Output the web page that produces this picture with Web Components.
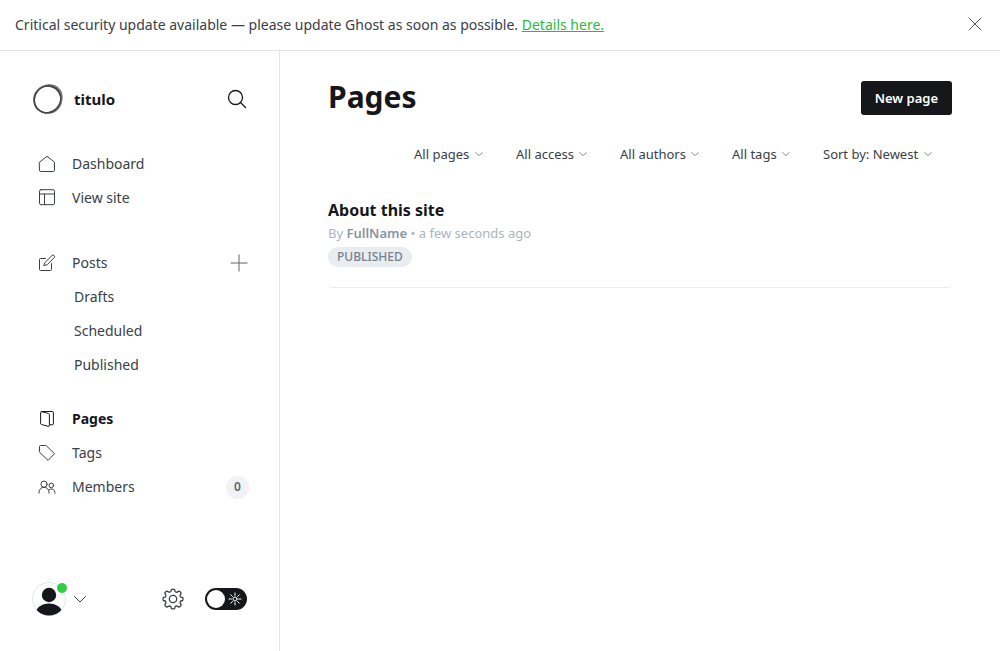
<!DOCTYPE html>
<html lang="en">
<head>
<meta charset="utf-8">
<meta name="viewport" content="width=device-width, initial-scale=1">
<title>Pages</title>
<style>
  html, body { margin: 0; }
  body { background: #fff; color: #394047; font-family: "Noto Sans", "Open Sans", sans-serif; font-size: 14px; line-height: 20px; }
</style>
</head>
<body>
<admin-app></admin-app>
<script>
const BASE = `*, *::before, *::after { box-sizing: border-box; }
  button, select, input { font: inherit; color: inherit; margin: 0; }
  button { background: none; border: 0; padding: 0; cursor: pointer; }
  a { color: inherit; text-decoration: none; }
  svg { display: block; }`;

function define(name, css, html) {
  const template = document.createElement('template');
  template.innerHTML = `<style>${BASE}${css}</style>${html}`;
  customElements.define(name, class extends HTMLElement {
    constructor() {
      super();
      this.attachShadow({ mode: 'open' }).append(template.content.cloneNode(true));
    }
  });
}

/* Each icon: [view box, drawing] */
const ICONS = {
  close: ['0 0 14 14', '<path d="M1 1l12 12M13 1L1 13"/>'],
  search: ['0 0 20 20', '<circle cx="8.5" cy="8.5" r="7"/><path d="M13.5 13.5l5 5"/>'],
  home: ['0 0 18 18', '<path d="M1.5 7.2L9 1.300l7.500 5.900v8.100a1.200 1.200 0 0 1-1.200 1.200H2.700a1.200 1.200 0 0 1-1.200-1.200z"/>'],
  site: ['0 0 18 18', '<rect x="1.500" y=".7" width="15" height="15" rx="1.500"/><path d="M1.500 5h15M6.500 5v10.700"/>'],
  edit: ['0 0 18 18', '<path d="M7.500 4.500H2.500a1 1 0 0 0-1 1v10a1 1 0 0 0 1 1h10a1 1 0 0 0 1-1V9.500"/><path d="M7 8.500L14 1.500a1.300 1.300 0 0 1 1.900 0l.3.300a1.300 1.300 0 0 1 0 1.900L9.200 10.700l-3 .8z"/>'],
  plus: ['0 0 18 18', '<path stroke-linecap="butt" d="M9 .5v17M.5 9h17"/>'],
  pages: ['0 0 18 18', '<path d="M3.500 1.500h10.700a1.200 1.200 0 0 1 1.200 1.200v11.100a1 1 0 0 1-1 1h-2.600"/><path d="M3.500 1.600l7 1.900a1.200 1.200 0 0 1 .9 1.200v10.600a1 1 0 0 1-1.300 1l-6.600-1.800a1.200 1.200 0 0 1-.9-1.200V2.500c0-.7.500-1 .9-.9z"/>'],
  tags: ['0 0 18 18', '<path d="M1.500 2.500a1 1 0 0 1 1-1h5a1.500 1.500 0 0 1 1 .4l8 7.800-6.400 6.600L1.900 8.700a1.500 1.500 0 0 1-.4-1z"/>'],
  members: ['0 0 18 18', '<circle cx="6" cy="6.200" r="3.100"/><circle cx="13.300" cy="7.400" r="2.300"/><path d="M1 15.200v-.9a5 5 0 0 1 10 0v.9M10.900 11.800a3.700 3.700 0 0 1 6.100 2.700v.7"/>'],
  chevron: ['0 0 14 14', '<path d="M1.500 4.500L7 10l5.500-5.500"/>'],
  gear: ['0 0 22 22', '<circle cx="11" cy="11" r="3.700"/><path d="M9.400 1.600q1.600-.8 3.200 0l.5 2q.9.900 2 .5l1.900-1q1.800.5 2.200 2.200l-1 1.800q-.3 1.300.5 2l2 .4q.7 1.500 0 3l-2 .5q-.9.900-.5 2.100l1 1.800q-.5 1.700-2.200 2.200l-1.900-1q-1.200-.3-2 .5l-.5 2q-1.600.7-3.200 0l-.5-2q-.8-.8-2-.5l-1.900 1q-1.700-.5-2.200-2.200l1-1.800q.3-1.200-.5-2.100l-2-.5q-.7-1.500 0-3l2-.4q.8-.8.500-2.100l-1-1.700Q3.300 3.600 5 3.100l1.900 1q1.200.3 2-.5z"/>'],
  sun: ['0 0 14 14', '<circle cx="7" cy="7" r="2"/><path d="M7 1v2.500M7 10.500v2.500M1 7h2.500M10.500 7h2.500M2.800 2.800l1.700 1.700M9.500 9.500l1.700 1.700M11.200 2.800l-1.700 1.700M4.500 9.500l-1.700 1.700"/>'],
  logo: ['0 0 32 32', '<path stroke="#aaa" stroke-width="2.500" d="M17 2.500c7 .5 11.500 5 12 10.500M28.500 21c-2 4.500-5.500 7.500-10 8.300"/><g stroke="#444"><circle cx="15.500" cy="16.500" r="13.500" stroke-width="1.500"/><ellipse cx="16.300" cy="15.800" rx="14.500" ry="13.200" transform="rotate(-48 16.300 15.800)" stroke="#777" stroke-width="1.200"/><ellipse cx="15.500" cy="16.300" rx="12.700" ry="14" transform="rotate(40 15.500 16.300)" stroke-width="1.300"/></g>'],
  user: ['0 0 34 34', '<defs><clipPath id="c"><circle cx="17" cy="17" r="16.500"/></clipPath></defs><circle cx="17" cy="17" r="16.500" stroke="#e3e6e9"/><g clip-path="url(#c)" fill="#15171a" stroke="none"><circle cx="17" cy="13" r="7.200"/><ellipse cx="17" cy="32" rx="13.500" ry="10.500"/></g>']
};

class UiIcon extends HTMLElement {
  connectedCallback() {
    if (this.shadowRoot) return;
    const [box, art] = ICONS[this.getAttribute('name')];
    this.attachShadow({ mode: 'open' }).innerHTML = `<style>
      :host { display: block; flex: none; width: var(--icon-size, 18px); height: var(--icon-size, 18px); }
      svg { display: block; width: 100%; height: 100%; overflow: visible; stroke-width: var(--icon-stroke, 1); }
    </style><svg viewBox="${box}" fill="none" stroke="currentColor" stroke-linecap="round" stroke-linejoin="round" aria-hidden="true">${art}</svg>`;
  }
}
customElements.define('ui-icon', UiIcon);

class NavItem extends HTMLElement {
  connectedCallback() {
    if (this.shadowRoot) return;
    const icon = this.getAttribute('icon');
    this.attachShadow({ mode: 'open' }).innerHTML = `<style>${BASE}
      :host { display: flex; align-items: center; justify-content: space-between; height: 34px; padding-left: 6px; }
      a { display: flex; align-items: center; gap: 16px; }
      :host([sub]) { padding-left: 42px; }
      :host([active]) { color: #15171a; }
      :host([active]) span { font-weight: 700; }
    </style><a href="#">${icon ? `<ui-icon name="${icon}"></ui-icon>` : ''}<span><slot></slot></span></a><slot name="end"></slot>`;
  }
}
customElements.define('nav-item', NavItem);

class FilterSelect extends HTMLElement {
  connectedCallback() {
    if (this.shadowRoot) return;
    const text = this.getAttribute('value');
    this.attachShadow({ mode: 'open' }).innerHTML = `<style>${BASE}
      :host { display: flex; align-items: center; gap: 5px; font-size: 13px; --icon-size: 8px; --icon-stroke: 1.5; }
      select { appearance: none; border: 0; padding: 0; background: none; height: 20px; line-height: 20px; }
      ui-icon { color: #6b7682; }
    </style><select aria-label="${this.getAttribute('label')}"><option>${text}</option></select><ui-icon name="chevron"></ui-icon>`;
  }
}
customElements.define('filter-select', FilterSelect);

define('alert-banner', `
  :host { display: flex; align-items: center; justify-content: space-between; min-height: 51px; padding: 0 18px 2px 15px; border-bottom: 1px solid #dfe1e3; }
  p { margin: 0; padding-top: 2px; }
  a { color: #2bba3c; text-decoration: underline; }
  button { --icon-size: 14px; --icon-stroke: 0.9; }
`, `<p>Critical security update available — please update Ghost as soon as possible. <a href="#">Details here.</a></p>
  <button type="button" aria-label="Close"><ui-icon name="close"></ui-icon></button>`);

define('side-bar', `
  :host { display: flex; flex-direction: column; width: 280px; flex: none; border-right: 1px solid #e3e6e8; padding: 32px 30px 35px 32px; }
  header { display: flex; align-items: center; height: 32px; gap: 10px; color: #15171a; padding-right: 2px; margin-bottom: 32px; }
  header strong { flex: 1; font-size: 15px; font-weight: 700; }
  header > ui-icon { --icon-size: 32px; }
  header button { --icon-size: 20px; --icon-stroke: 1.3; }
  nav { display: flex; flex-direction: column; }
  .group { margin-bottom: 31px; }
  .posts { margin-bottom: 20px; }
  .count { display: grid; place-items: center; width: 23px; height: 23px; border-radius: 12px; background: #f1f2f4; font-size: 12px; font-weight: 600; color: #5a6570; }
  .add { --icon-size: 18px; margin-right: 1px; color: #5f666d; }
  footer { display: flex; align-items: center; margin-top: auto; height: 34px; padding-right: 2px; }
  .account { position: relative; display: flex; align-items: center; gap: 7px; --icon-size: 14px; }
  .account ui-icon[name=user] { --icon-size: 34px; }
  .dot { position: absolute; left: 25px; top: 1px; width: 10px; height: 10px; border-radius: 50%; background: #30cf43; }
  .settings { --icon-size: 22px; --icon-stroke: 1.3; margin: 0 21px 0 auto; }
  .switch { position: relative; display: flex; align-items: center; justify-content: flex-end; width: 42px; height: 22px; padding-right: 5px; border-radius: 11px; background: #15171a; color: #fff; --icon-size: 14px; cursor: pointer; }
  .switch input { appearance: none; position: absolute; inset: 0; }
  .switch::before { content: ""; position: absolute; left: 2px; top: 2px; width: 18px; height: 18px; border-radius: 50%; background: #fff; }
`, `<header><ui-icon name="logo"></ui-icon><strong>titulo</strong><button type="button" aria-label="Search"><ui-icon name="search"></ui-icon></button></header>
  <nav>
    <div class="group"><nav-item icon="home">Dashboard</nav-item><nav-item icon="site">View site</nav-item></div>
    <div class="posts"><nav-item icon="edit">Posts<button class="add" slot="end" type="button" aria-label="New post"><ui-icon name="plus"></ui-icon></button></nav-item>
      <nav-item sub>Drafts</nav-item><nav-item sub>Scheduled</nav-item><nav-item sub>Published</nav-item></div>
    <div><nav-item icon="pages" active>Pages</nav-item><nav-item icon="tags">Tags</nav-item><nav-item icon="members">Members<span class="count" slot="end">0</span></nav-item></div>
  </nav>
  <footer>
    <button class="account" type="button" aria-label="Account"><ui-icon name="user"></ui-icon><span class="dot"></span><ui-icon name="chevron"></ui-icon></button>
    <button class="settings" type="button" aria-label="Settings"><ui-icon name="gear"></ui-icon></button>
    <label class="switch"><input type="checkbox" aria-label="Night shift"><ui-icon name="sun"></ui-icon></label>
  </footer>`);

define('page-row', `
  :host { display: block; padding-bottom: 20px; border-bottom: 1px solid #ebeef0; border-radius: 4px; }
  h3 { margin: 0; font-size: 16px; line-height: 24px; font-weight: 700; color: #15171a; }
  p { margin: 0 0 2px; font-size: 13px; line-height: 23px; color: #abb4be; }
  ::slotted(b) { color: #8695a4; font-weight: 600; }
  .badge { display: block; width: fit-content; padding: 0 9px; border-radius: 10px; background: #e9edf0; color: #738291; font-size: 12px; line-height: 20px; font-weight: 500; }
`, `<h3><a href="#"><slot name="title"></slot></a></h3><p><slot></slot></p><span class="badge"><slot name="status"></slot></span>`);

define('page-list', `
  :host { display: block; flex: 1; min-width: 0; padding: 30px 48px; }
  header { display: flex; align-items: flex-start; justify-content: space-between; }
  h1 { margin: 0; color: #15171a; font-size: 30px; line-height: 32px; font-weight: 700; }
  .new { height: 34px; padding: 0 14px; border-radius: 3px; background: #15171a; color: #fff; font-size: 13px; font-weight: 600; }
  .filters { display: flex; justify-content: flex-end; gap: 33px; margin: 29px 20px 34px 0; }
`, `<header><h1>Pages</h1><button class="new" type="button">New page</button></header>
  <div class="filters">
    <filter-select label="Page type" value="All pages"></filter-select>
    <filter-select label="Access" value="All access"></filter-select>
    <filter-select label="Author" value="All authors"></filter-select>
    <filter-select label="Tag" value="All tags"></filter-select>
    <filter-select label="Order" value="Sort by: Newest"></filter-select>
  </div>
  <page-row><span slot="title">About this site</span>By <b>FullName</b> • a few seconds ago<span slot="status">PUBLISHED</span></page-row>`);

define('admin-app', `
  :host { display: flex; flex-direction: column; min-height: 100vh; }
  main { display: flex; flex: 1; }
`, `<alert-banner></alert-banner><main><side-bar></side-bar><page-list></page-list></main>`);
</script>
</body>
</html>
